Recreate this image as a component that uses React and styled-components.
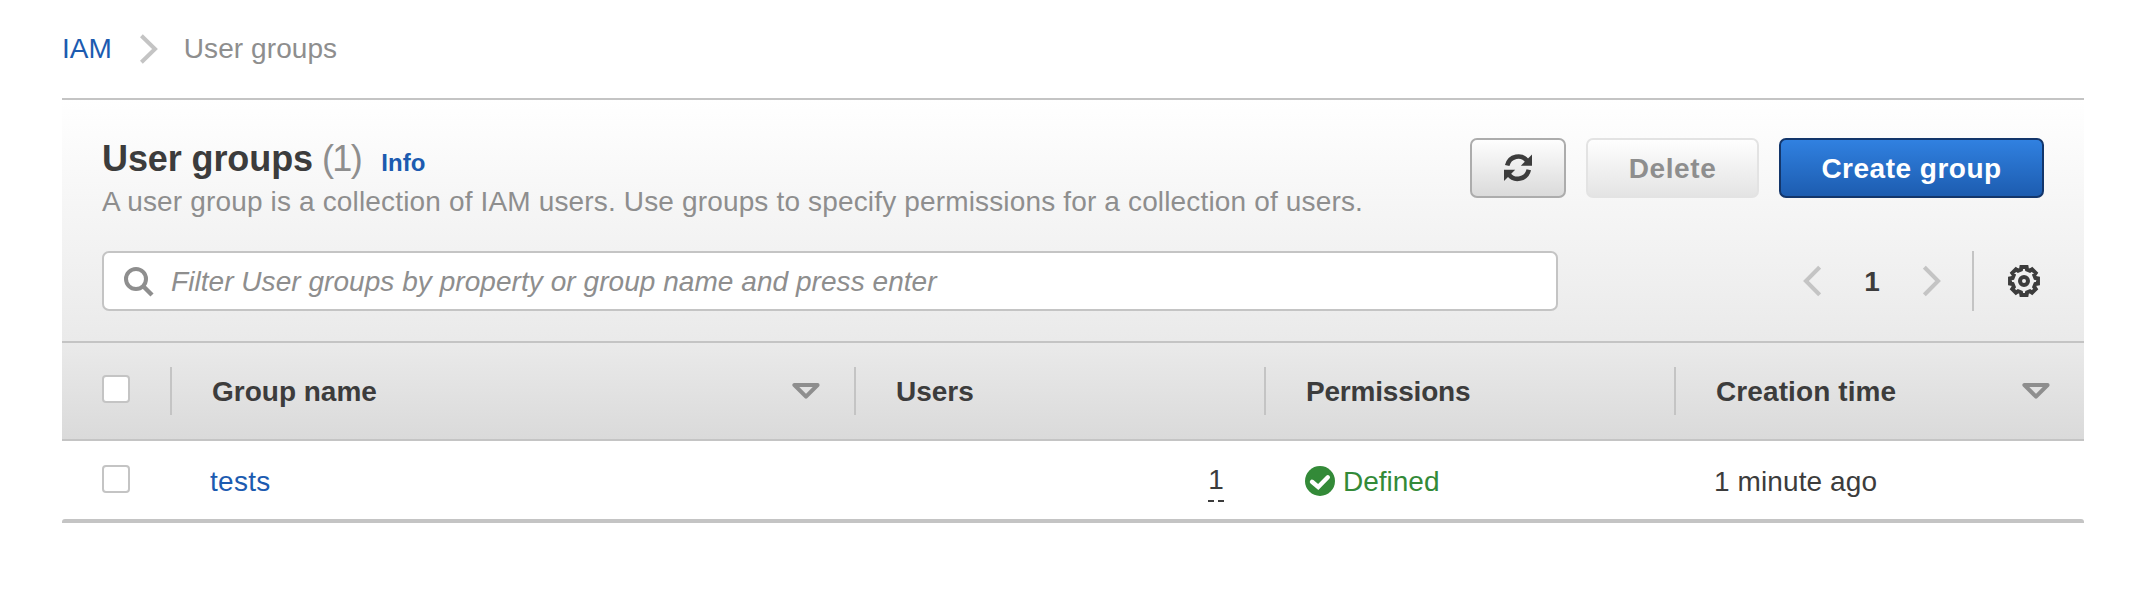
import React from "react";
import styled, { createGlobalStyle, css } from "styled-components";

const color = {
  text: "#3c3c3c",
  muted: "#8e8e8e",
  line: "#c4c4c4",
  link: "#1c5bb0",
  success: "#338a38",
};

const GlobalStyle = createGlobalStyle`
  * { box-sizing: border-box; }
  body {
    margin: 0;
    background: #fff;
    color: ${color.text};
    font: 28px/36px "Liberation Sans", Arial, sans-serif;
    -webkit-font-smoothing: antialiased;
  }
`;

const tracking = css`
  letter-spacing: ${(p) => p.$tracking || "normal"};
`;

const Page = styled.main`
  height: 590px;
  padding: 0 46px 0 62px;
`;

const Breadcrumbs = styled.nav`
  display: flex;
  align-items: center;
  height: 98px;
  white-space: nowrap;
`;

const Link = styled.a`
  color: ${color.link};
  text-decoration: none;
  ${tracking}
`;

const Crumb = styled.span`
  color: ${color.muted};
  ${tracking}
`;

const CrumbArrow = styled.svg`
  margin: 0 26px 0 28px;
`;

const Panel = styled.section`
  display: flex;
  flex-direction: column;
`;

const PanelFoot = styled.div`
  height: 4px;
  border-radius: 3px 3px 0 0;
  background: ${color.line};
`;

const PanelHeader = styled.header`
  height: 245px;
  padding: 38px 40px 0;
  border-top: 2px solid ${color.line};
  border-bottom: 2px solid ${color.line};
  background: linear-gradient(#fff, #eaeaea);
`;

const TitleRow = styled.div`
  display: flex;
  justify-content: space-between;
  height: 113px;
`;

const Title = styled.h1`
  display: flex;
  align-items: baseline;
  height: 46px;
  margin: 0;
  padding-top: 1px;
  font-size: 36px;
  line-height: 40px;
  white-space: nowrap;
  ${tracking}
`;

const Count = styled.span`
  margin-left: 9px;
  color: ${color.muted};
  font-weight: 400;
  letter-spacing: -1.6px;
`;

const InfoLink = styled(Link)`
  margin-left: 20px;
  font-size: 24px;
  font-weight: 700;
`;

const Description = styled.p`
  margin: 0;
  color: ${color.muted};
  line-height: 36px;
  white-space: nowrap;
  ${tracking}
`;

const Actions = styled.div`
  display: flex;
  gap: 20px;
`;

const Button = styled.button`
  display: flex;
  align-items: center;
  justify-content: center;
  width: ${(p) => p.$width};
  height: 60px;
  padding: 2px 0 0;
  border: 2px solid #acacac;
  border-radius: 7px;
  background: linear-gradient(#fff, #d9d9d9) border-box;
  color: ${color.text};
  font: inherit;
  font-weight: 700;
  white-space: nowrap;
  ${tracking}
  svg {
    margin-bottom: 2px;
  }
  ${(p) =>
    p.$variant === "primary" &&
    css`
      border-color: #13366b;
      background: linear-gradient(#3182e2, #1c5bae) border-box;
      color: #fff;
    `}
  ${(p) =>
    p.disabled &&
    css`
      border-color: #e3e3e3;
      background: linear-gradient(#fff, #e3e3e3) border-box;
      color: ${color.muted};
    `}
`;

const ToolRow = styled.div`
  display: flex;
  align-items: center;
  justify-content: space-between;
  height: 60px;
`;

const SearchBox = styled.label`
  display: flex;
  align-items: center;
  width: 1456px;
  height: 60px;
  padding-left: 20px;
  border: 2px solid ${color.line};
  border-radius: 7px;
  background: #fff;
  svg {
    margin-top: 1px;
  }
`;

const SearchInput = styled.input`
  flex: 1;
  height: 56px;
  margin-left: 17px;
  padding: 2px 0 0;
  border: 0;
  outline: 0;
  background: transparent;
  font: italic 28px "Liberation Sans", Arial, sans-serif;
  ${tracking}
  &::placeholder {
    color: ${color.muted};
    opacity: 1;
  }
`;

const Pager = styled.div`
  display: flex;
  align-items: center;
  height: 60px;
  padding-right: 31px;
  border-right: 2px solid ${color.line};
`;

const PageNumber = styled.span`
  width: 102px;
  padding-top: 1px;
  text-align: center;
  font-weight: 700;
`;

const Settings = styled.div`
  display: flex;
  align-items: center;
  padding: 0 4px 0 34px;
`;

const Controls = styled.div`
  display: flex;
  align-items: center;
`;

const Checkbox = styled.input.attrs({ type: "checkbox" })`
  appearance: none;
  width: 28px;
  height: 28px;
  margin: 0;
  border: 2px solid ${color.line};
  border-radius: 4px;
  background: #fff;
`;

const columns = css`
  display: grid;
  grid-template-columns: 110px 684px 410px 410px 408px;
`;

const HeadRow = styled.div`
  ${columns}
  align-items: center;
  height: 98px;
  border-bottom: 2px solid ${color.line};
  background: linear-gradient(#eaeaea, #dadada);
`;

const HeadCell = styled.div`
  display: flex;
  align-items: center;
  justify-content: space-between;
  height: 48px;
  padding: 2px 34px 0 40px;
  border-right: ${(p) => (p.$last ? "0" : `2px solid ${color.line}`)};
  font-weight: 700;
  ${tracking}
  ${Checkbox} {
    margin-bottom: 6px;
  }
  svg {
    margin-bottom: 2px;
  }
`;

const BodyRow = styled.div`
  ${columns}
  align-items: center;
  height: 78px;
`;

const Cell = styled.div`
  display: flex;
  align-items: center;
  justify-content: ${(p) => (p.$right ? "flex-end" : "flex-start")};
  height: 78px;
  padding: 4px 42px 0 38px;
  ${tracking}
`;

const CheckCell = styled(Cell)`
  padding: 0 0 2px 40px;
`;

const UserCount = styled.span`
  display: flex;
  justify-content: center;
  width: 16px;
  height: 40px;
  background: linear-gradient(90deg, ${color.text} 6px, transparent 6px 10px, ${color.text} 10px)
    bottom / 100% 2px no-repeat;
`;

const Status = styled.span`
  display: flex;
  align-items: center;
  gap: 8px;
  margin-left: 1px;
  color: ${color.success};
  svg {
    margin-bottom: 2px;
  }
`;

const Chevron = ({ left }) => (
  <svg width="18" height="32" viewBox="0 0 18 32" fill="none" stroke={color.line} strokeWidth="4">
    <path d={left ? "M16.6 2.2 2.9 16l13.7 13.8" : "M1.4 2.2 15.1 16 1.4 29.8"} />
  </svg>
);

const SortIcon = () => (
  <svg width="28" height="18" viewBox="0 0 28 18" fill="none" stroke={color.muted} strokeWidth="4" strokeLinejoin="round">
    <path d="M2.4 3h23.2L14 14.6z" />
  </svg>
);

const SearchIcon = () => (
  <svg width="30" height="30" viewBox="0 0 30 30" fill="none" stroke={color.muted} strokeWidth="4">
    <circle cx="12" cy="12" r="10" />
    <path d="M19 19l9 9" strokeWidth="4.4" />
  </svg>
);

const RefreshIcon = () => (
  <svg width="28" height="30" viewBox="0 0 28 30" fill="none" stroke={color.text} strokeWidth="4.6">
    <path d="M3.2 12.6A11.4 11.8 0 0 1 23.5 8.4" />
    <path d="M28 1.5v11.3H16.800z" fill={color.text} stroke="none" />
    <path d="M24.8 16.800A11.4 11.8 0 0 1 4.5 21" />
    <path d="M0 28V16.700h11.200z" fill={color.text} stroke="none" />
  </svg>
);

const gearOutline = Array.from({ length: 8 }, (_, tooth) =>
  [
    [-15, 11.8],
    [-10.5, 14.2],
    [10.5, 14.2],
    [15, 11.8],
  ].map(([offset, radius]) => {
    const angle = ((tooth * 45 + offset) * Math.PI) / 180;
    return `${(16 + radius * Math.sin(angle)).toFixed(2)},${(16 - radius * Math.cos(angle)).toFixed(2)}`;
  })
)
  .flat()
  .join(" ");

const GearIcon = () => (
  <svg width="32" height="32" viewBox="0 0 32 32" fill="none" stroke={color.text}>
    <polygon points={gearOutline} strokeWidth="4" />
    <circle cx="16" cy="16" r="4" strokeWidth="4" />
  </svg>
);

const CheckIcon = () => (
  <svg width="30" height="30" viewBox="0 0 30 30">
    <circle cx="15" cy="15" r="15" fill={color.success} />
    <path
      d="M7 15.8l6.2 5.2L22.8 11.3"
      fill="none"
      stroke="#fff"
      strokeWidth="4.4"
      strokeLinecap="round"
    />
  </svg>
);

export default function App() {
  return (
    <Page>
      <GlobalStyle />
      <Breadcrumbs>
        <Link>IAM</Link>
        <CrumbArrow width="18" height="32" viewBox="0 0 18 32" fill="none" stroke={color.line} strokeWidth="4">
          <path d="M1.4 2.8 15 16 1.4 29.2" />
        </CrumbArrow>
        <Crumb $tracking="0.08px">User groups</Crumb>
      </Breadcrumbs>
      <Panel>
        <PanelHeader>
          <TitleRow>
            <div>
              <Title $tracking="-0.1px">
                User groups<Count>(1)</Count>
                <InfoLink $tracking="0.1px">Info</InfoLink>
              </Title>
              <Description $tracking="0.155px">
                A user group is a collection of IAM users. Use groups to specify permissions for a collection of users.
              </Description>
            </div>
            <Actions>
              <Button $width="96px" aria-label="Refresh">
                <RefreshIcon />
              </Button>
              <Button $width="173px" $tracking="0.6px" disabled>
                Delete
              </Button>
              <Button $width="265px" $variant="primary" $tracking="0.5px">
                Create group
              </Button>
            </Actions>
          </TitleRow>
          <ToolRow>
            <SearchBox>
              <SearchIcon />
              <SearchInput
                $tracking="0.05px"
                placeholder="Filter User groups by property or group name and press enter"
              />
            </SearchBox>
            <Controls>
              <Pager>
                <Chevron left />
                <PageNumber>1</PageNumber>
                <Chevron />
              </Pager>
              <Settings>
                <GearIcon />
              </Settings>
            </Controls>
          </ToolRow>
        </PanelHeader>
        <HeadRow>
          <HeadCell>
            <Checkbox aria-label="Select all groups" />
          </HeadCell>
          <HeadCell>
            Group name
            <SortIcon />
          </HeadCell>
          <HeadCell>Users</HeadCell>
          <HeadCell $tracking="-0.2px">Permissions</HeadCell>
          <HeadCell $last $tracking="0.1px">
            Creation time
            <SortIcon />
          </HeadCell>
        </HeadRow>
        <BodyRow>
          <CheckCell>
            <Checkbox aria-label="Select tests" />
          </CheckCell>
          <Cell>
            <Link $tracking="0.3px">tests</Link>
          </Cell>
          <Cell $right>
            <UserCount>1</UserCount>
          </Cell>
          <Cell>
            <Status>
              <CheckIcon />
              Defined
            </Status>
          </Cell>
          <Cell $tracking="0.1px">1 minute ago</Cell>
        </BodyRow>
        <PanelFoot />
      </Panel>
    </Page>
  );
}
